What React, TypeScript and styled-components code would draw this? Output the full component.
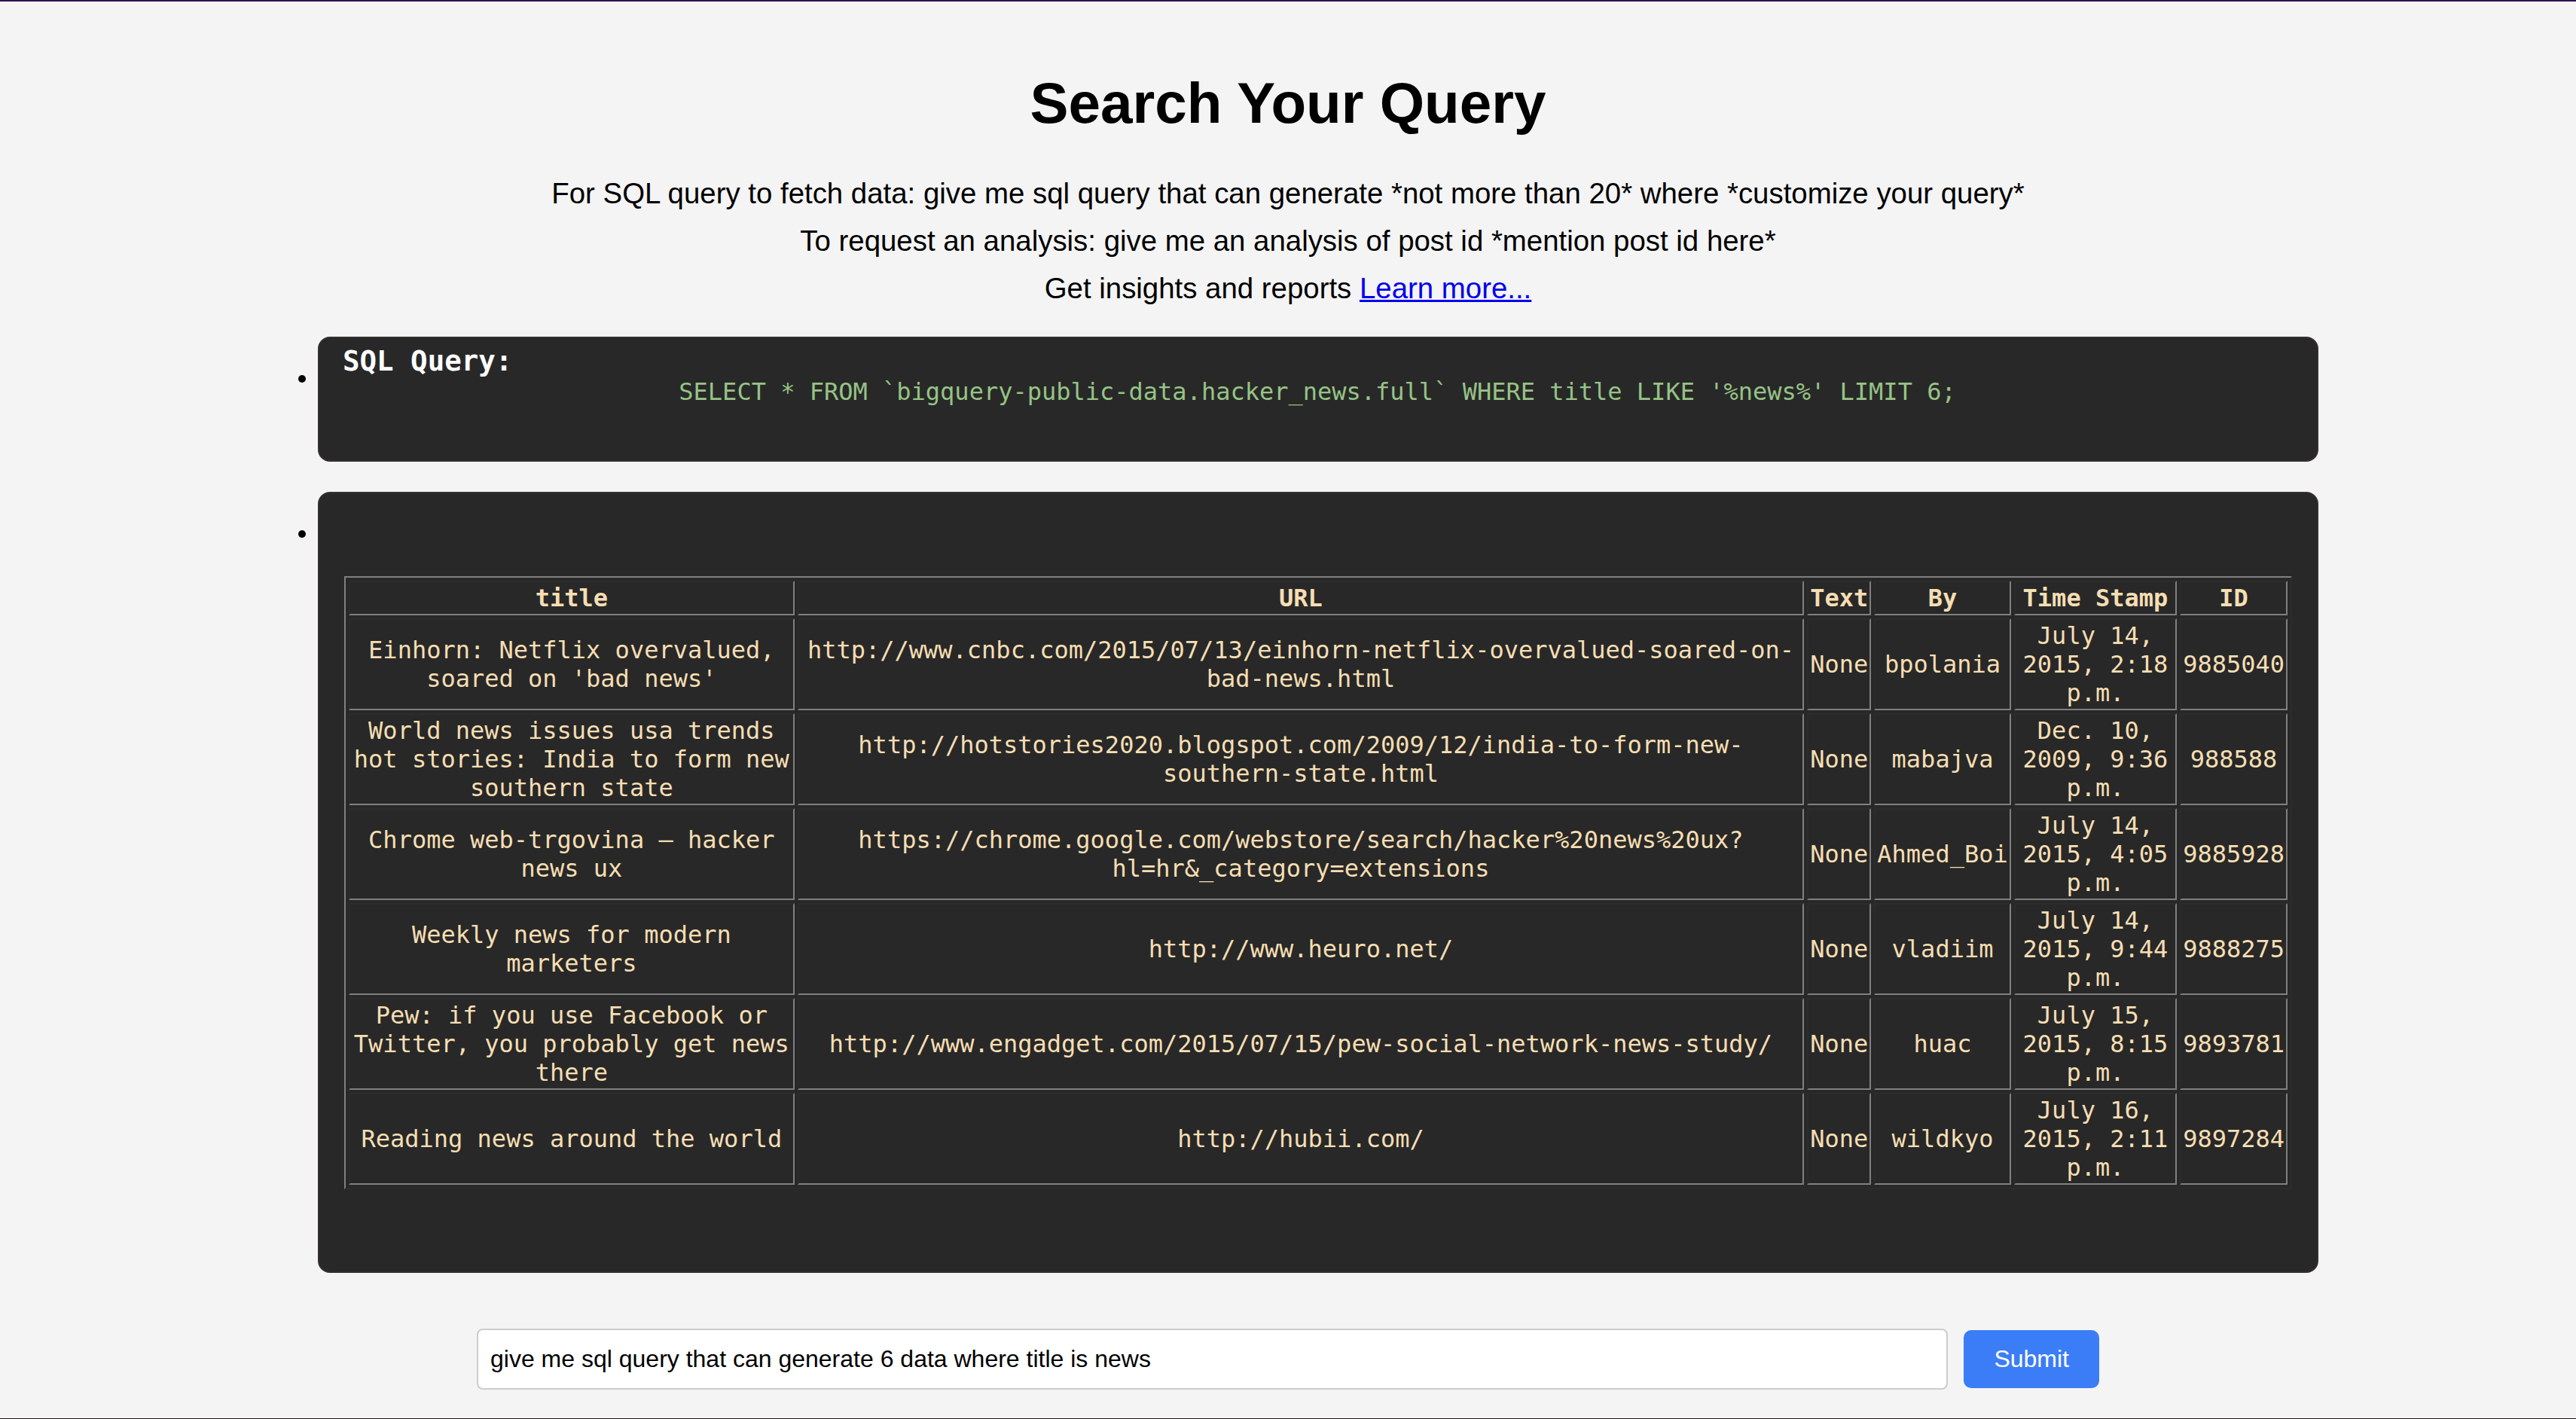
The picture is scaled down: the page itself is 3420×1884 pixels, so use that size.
import React from "react";
import styled, { createGlobalStyle } from "styled-components";

const GlobalStyle = createGlobalStyle`
  html, body {
    margin: 0;
    padding: 0;
  }
  body {
    background: #f4f4f4;
    border-top: 2px solid #2b1156;
    font-family: "Liberation Sans", Arial, sans-serif;
    color: #000;
  }
`;

const Page = styled.main`
  display: flex;
  flex-direction: column;
  align-items: center;
  padding-top: 92px;
`;

const Title = styled.h1`
  margin: 0;
  font-size: 76.4px;
  font-weight: 700;
  line-height: 86px;
`;

const Intro = styled.div`
  margin-top: 55px;
  display: flex;
  flex-direction: column;
  align-items: center;
  gap: 19.2px;
`;

const IntroLine = styled.p`
  margin: 0;
  font-size: 38.4px;
  line-height: normal;
`;

const LearnLink = styled.a`
  color: #0000ee;
  text-decoration: underline;
`;

const ResultList = styled.ul`
  list-style: none;
  margin: 42px 0 0;
  padding: 0;
  width: 2736px;
  display: flex;
  flex-direction: column;
  gap: 40px;
`;

const ResultItem = styled.li`
  display: flex;
  align-items: flex-start;
`;

const MarkerSlot = styled.span`
  flex: 0 0 80px;
  box-sizing: border-box;
  display: flex;
  justify-content: flex-end;
  padding: 51px 16px 0 0;
`;

const Dot = styled.span`
  width: 10px;
  height: 10px;
  border-radius: 50%;
  background: #000;
`;

const Card = styled.section<{ $pad: string }>`
  flex: 1;
  min-width: 0;
  box-sizing: border-box;
  background: #282828;
  border: 2px solid #34302d;
  border-radius: 16px;
  padding: ${(p) => p.$pad};
  font-family: "DejaVu Sans Mono", "Liberation Mono", monospace;
  color: #f5deb3;
`;

const CardHeading = styled.h3`
  margin: 0;
  font-size: 37.44px;
  font-weight: 700;
  line-height: normal;
  color: #ffffff;
`;

const CodeLine = styled.code`
  display: block;
  text-align: center;
  white-space: pre;
  font-family: inherit;
  font-size: 32px;
  line-height: 38px;
  color: #96c386;
`;

const DataTable = styled.table`
  width: 100%;
  border-collapse: separate;
  border-spacing: 4px;
  border: 2px outset grey;
  font-size: 32px;
  line-height: 38px;
  color: #f5deb3;
`;

const HeadCell = styled.th`
  border: 2px inset grey;
  padding: 2px;
  font-weight: 700;
  text-align: center;
  vertical-align: middle;
`;

const BodyCell = styled.td`
  border: 2px inset grey;
  padding: 2px;
  text-align: center;
  vertical-align: middle;
`;

const Composer = styled.form`
  display: flex;
  align-items: center;
  gap: 21px;
  width: 2154px;
  margin: 74px 0 38px;
`;

const QueryInput = styled.input`
  flex: 1;
  min-width: 0;
  box-sizing: border-box;
  font-family: "Liberation Sans", Arial, sans-serif;
  font-size: 32px;
  line-height: normal;
  padding: 20px 16px;
  border: 2px solid #cccccc;
  border-radius: 8px;
  background: #ffffff;
  color: #000;
  outline: none;
`;

const SubmitButton = styled.button`
  font-family: "Liberation Sans", Arial, sans-serif;
  font-size: 32px;
  line-height: normal;
  padding: 20px 40px;
  border: none;
  border-radius: 10px;
  background: #3b7df6;
  color: #ffffff;
  cursor: pointer;
`;

const BottomStrip = styled.div`
  width: 100%;
  height: 6px;
  background: #17120e;
`;

type Row = {
  title: string;
  url: string;
  text: string;
  by: string;
  time: string;
  id: string;
};

const rows: Row[] = [
  {
    title: "Einhorn: Netflix overvalued, soared on 'bad news'",
    url: "http://www.cnbc.com/2015/07/13/einhorn-netflix-overvalued-soared-on-bad-news.html",
    text: "None",
    by: "bpolania",
    time: "July 14, 2015, 2:18 p.m.",
    id: "9885040",
  },
  {
    title: "World news issues usa trends hot stories: India to form new southern state",
    url: "http://hotstories2020.blogspot.com/2009/12/india-to-form-new-southern-state.html",
    text: "None",
    by: "mabajva",
    time: "Dec. 10, 2009, 9:36 p.m.",
    id: "988588",
  },
  {
    title: "Chrome web-trgovina \u2013 hacker news ux",
    url: "https://chrome.google.com/webstore/search/hacker%20news%20ux?hl=hr&_category=extensions",
    text: "None",
    by: "Ahmed_Boi",
    time: "July 14, 2015, 4:05 p.m.",
    id: "9885928",
  },
  {
    title: "Weekly news for modern marketers",
    url: "http://www.heuro.net/",
    text: "None",
    by: "vladiim",
    time: "July 14, 2015, 9:44 p.m.",
    id: "9888275",
  },
  {
    title: "Pew: if you use Facebook or Twitter, you probably get news there",
    url: "http://www.engadget.com/2015/07/15/pew-social-network-news-study/",
    text: "None",
    by: "huac",
    time: "July 15, 2015, 8:15 p.m.",
    id: "9893781",
  },
  {
    title: "Reading news around the world",
    url: "http://hubii.com/",
    text: "None",
    by: "wildkyo",
    time: "July 16, 2015, 2:11 p.m.",
    id: "9897284",
  },
];

const headers = ["title", "URL", "Text", "By", "Time Stamp", "ID"];

export default function App() {
  return (
    <>
      <GlobalStyle />
      <Page>
        <Title>Search Your Query</Title>
        <Intro>
          <IntroLine>
            For SQL query to fetch data: give me sql query that can generate *not more than 20* where *customize your query*
          </IntroLine>
          <IntroLine>To request an analysis: give me an analysis of post id *mention post id here*</IntroLine>
          <IntroLine>
            Get insights and reports <LearnLink href="#">Learn more...</LearnLink>
          </IntroLine>
        </Intro>

        <ResultList>
          <ResultItem>
            <MarkerSlot>
              <Dot />
            </MarkerSlot>
            <Card $pad="8px 33px 72px 31px">
              <CardHeading>SQL Query:</CardHeading>
              <CodeLine>
                SELECT * FROM `bigquery-public-data.hacker_news.full` WHERE title LIKE '%news%' LIMIT 6;
              </CodeLine>
            </Card>
          </ResultItem>
          <ResultItem>
            <MarkerSlot>
              <Dot />
            </MarkerSlot>
            <Card $pad="110px 33px 109px">
              <DataTable>
                <thead>
                  <tr>
                    {headers.map((h) => (
                      <HeadCell key={h}>{h}</HeadCell>
                    ))}
                  </tr>
                </thead>
                <tbody>
                  {rows.map((r) => (
                    <tr key={r.id}>
                      <BodyCell>{r.title}</BodyCell>
                      <BodyCell>{r.url}</BodyCell>
                      <BodyCell>{r.text}</BodyCell>
                      <BodyCell>{r.by}</BodyCell>
                      <BodyCell>{r.time}</BodyCell>
                      <BodyCell>{r.id}</BodyCell>
                    </tr>
                  ))}
                </tbody>
              </DataTable>
            </Card>
          </ResultItem>
        </ResultList>

        <Composer onSubmit={(e) => e.preventDefault()}>
          <QueryInput type="text" defaultValue="give me sql query that can generate 6 data where title is news" />
          <SubmitButton type="submit">Submit</SubmitButton>
        </Composer>
        <BottomStrip />
      </Page>
    </>
  );
}
